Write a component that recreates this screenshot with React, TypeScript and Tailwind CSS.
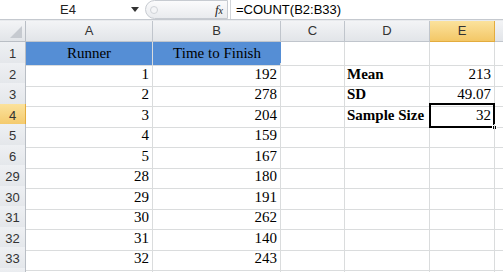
const rows: { n: number; a: string; b: string; d?: string; e?: string }[] = [
  { n: 2, a: "1", b: "192", d: "Mean", e: "213" },
  { n: 3, a: "2", b: "278", d: "SD", e: "49.07" },
  { n: 4, a: "3", b: "204", d: "Sample Size", e: "32" },
  { n: 5, a: "4", b: "159" },
  { n: 6, a: "5", b: "167" },
  { n: 29, a: "28", b: "180" },
  { n: 30, a: "29", b: "191" },
  { n: 31, a: "30", b: "262" },
  { n: 32, a: "31", b: "140" },
  { n: 33, a: "32", b: "243" },
];

const heights = ["h-[20px]", "h-[21px]", "h-[20px]", "h-[21px]", "h-[20px]", "h-[21px]", "h-[20px]", "h-[21px]", "h-[20px]", "h-[21px]"];

const cols = "grid grid-cols-[26px_127px_128px_64px_85px_65px_1fr]";
const serif = "font-['Liberation_Serif',serif] text-[15px] text-black";
const sans = "font-['Liberation_Sans',Arial,sans-serif]";
const cell = "border-r border-b border-[#dadcdd]";

export default function App() {
  return (
    <div className={`w-[503px] h-[272px] overflow-hidden bg-white ${sans}`}>
      {/* formula bar */}
      <div className="h-[20px] flex items-center border-b border-[#c5c9cf] bg-white">
        <div className="w-[128px] text-center text-[13px] text-[#222] pl-[8px]">E4</div>
        <svg width="8" height="5" className="ml-[3px]" viewBox="0 0 8 5">
          <path d="M0 0 L8 0 L4 5 Z" fill="#333" />
        </svg>
        <div className="ml-[6px] w-[83px] h-[19px] rounded-l-full border border-[#c7cbd1] bg-gradient-to-b from-[#fbfbfc] to-[#e9ebee] flex items-center justify-between pl-[4px] pr-[4px]">
          <div className="w-[8px] h-[8px] rounded-full border border-[#d0d3d8] bg-[#f4f5f7]" />
          <span className="font-['Liberation_Serif',serif] italic text-[13px] text-[#222] leading-none">
            f<span className="text-[10px]">x</span>
          </span>
        </div>
        <div className="ml-[2px] w-px h-[19px] bg-[#d3d6da]" />
        <div className="ml-[5px] text-[13px] text-black">=COUNT(B2:B33)</div>
      </div>

      {/* column headers */}
      <div className={`${cols} h-[22px] border-t border-[#e8eaed] bg-gradient-to-b from-[#f3f4f6] to-[#e1e4e8] text-[13px] text-[#333]`}>
        <div className="border-r border-b border-[#b9bec5] relative">
          <svg className="absolute right-[3px] bottom-[3px]" width="12" height="12" viewBox="0 0 12 12">
            <path d="M12 0 L12 12 L0 12 Z" fill="#c6cad0" />
          </svg>
        </div>
        {["A", "B", "C", "D"].map((c) => (
          <div key={c} className="border-r border-b border-[#c0c5cc] flex items-center justify-center">
            {c}
          </div>
        ))}
        <div className="border-r border-b border-[#e3ac3e] bg-gradient-to-b from-[#fbe29c] to-[#f3c766] flex items-center justify-center">
          E
        </div>
        <div className="border-b border-[#c0c5cc]" />
      </div>

      {/* row 1 */}
      <div className={`${cols} h-[21px]`}>
        <div className="border-r border-b border-[#b9bec5] bg-gradient-to-b from-[#eef0f3] to-[#e3e6ea] flex items-center justify-center text-[13px] text-[#333]">
          1
        </div>
        <div className={`border-r border-b border-[#dadcdd] bg-[#558ed5] flex items-center justify-center ${serif}`}>Runner</div>
        <div className={`border-b border-[#dadcdd] bg-[#558ed5] flex items-center justify-center ${serif}`}>Time to Finish</div>
        <div className={cell} />
        <div className={cell} />
        <div className={cell} />
        <div className="border-b border-[#dadcdd]" />
      </div>

      {rows.map((r, i) => {
        const sel = r.n === 4;
        return (
          <div key={r.n} className={`${cols} ${heights[i]}`}>
            <div
              className={`border-r border-b flex items-center justify-center text-[13px] text-[#333] ${
                sel
                  ? "border-[#e3ac3e] bg-gradient-to-b from-[#fbe29c] to-[#f3c766]"
                  : "border-[#b9bec5] bg-gradient-to-b from-[#eef0f3] to-[#e3e6ea]"
              }`}
            >
              {r.n}
            </div>
            <div className={`${cell} flex items-center justify-end pr-[3px] ${serif}`}>{r.a}</div>
            <div className={`${cell} flex items-center justify-end pr-[3px] ${serif}`}>{r.b}</div>
            <div className={cell} />
            <div className={`${cell} flex items-center pl-[2px] whitespace-nowrap font-bold ${serif}`}>{r.d}</div>
            <div className={`${cell} relative flex items-center justify-end pr-[3px] ${serif}`}>
              {r.e}
              {sel && (
                <>
                  <div className="absolute -left-[1px] -top-[1px] right-[-1px] bottom-[-1px] border-2 border-black" />
                  <div className="absolute right-[-3px] bottom-[-3px] w-[5px] h-[5px] bg-black border border-white" />
                </>
              )}
            </div>
            <div className="border-b border-[#dadcdd]" />
          </div>
        );
      })}

      <div className={`${cols} h-[10px]`}>
        <div className="border-r border-[#b9bec5] bg-gradient-to-b from-[#eef0f3] to-[#e3e6ea]" />
        <div className="border-r border-[#dadcdd]" />
        <div className="border-r border-[#dadcdd]" />
        <div className="border-r border-[#dadcdd]" />
        <div className="border-r border-[#dadcdd]" />
        <div className="border-r border-[#dadcdd]" />
        <div />
      </div>
    </div>
  );
}
